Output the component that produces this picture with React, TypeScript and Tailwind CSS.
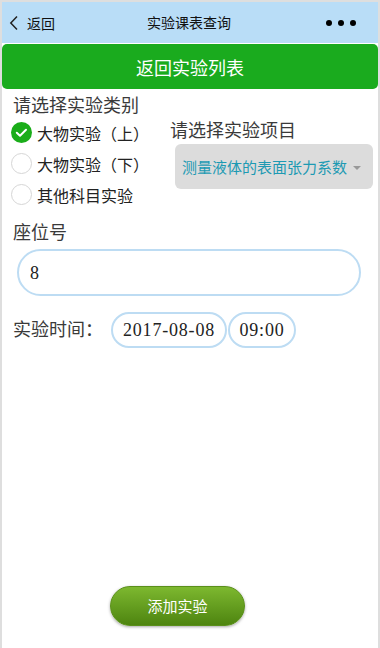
import { useState } from "react";

const sans = { fontFamily: '"Noto Sans CJK SC", "Noto Sans", sans-serif' };
const serif = { fontFamily: '"Liberation Serif", "Noto Sans CJK SC", serif' };

// label text, and an optional bracketed suffix drawn with full-width parens
const categories: [string, string?][] = [["大物实验", "上"], ["大物实验", "下"], ["其他科目实验"]];

function Radio({ checked }: { checked: boolean }) {
  if (checked) {
    return (
      <svg width="21" height="21" viewBox="0 0 21 21" className="shrink-0">
        <circle cx="10.5" cy="10.5" r="10.5" fill="#1aad19" />
        <path d="M5.8 10.8 L9 13.8 L15 7.8" fill="none" stroke="#fff" strokeWidth="2" strokeLinecap="round" strokeLinejoin="round" />
      </svg>
    );
  }
  return <span className="w-[21px] h-[21px] shrink-0 rounded-full border border-[#d6d6d6] bg-white" />;
}

export default function App() {
  const [category, setCategory] = useState(0);

  return (
    <div className="h-[648px] w-full flex flex-col border-2 border-b-0 border-[#dedede] bg-white" style={sans}>
      {/* nav bar */}
      <div className="h-[41px] shrink-0 bg-[#b9ddf7] flex items-center relative">
        <div className="flex items-center ml-[7px] gap-[8px]">
          <svg width="10" height="16" viewBox="0 0 10 16">
            <path d="M8 1.5 L1.8 8 L8 14.5" fill="none" stroke="#222" strokeWidth="1.5" />
          </svg>
          <span className="text-[14px] leading-[20px] text-[#111]">返回</span>
        </div>
        <span className="absolute left-[145px] top-[10px] text-[14px] leading-[20px] text-[#111]">实验课表查询</span>
        <div className="ml-auto mr-[22px] flex items-center gap-[6px]">
          <span className="w-[6px] h-[6px] rounded-full bg-black" />
          <span className="w-[6px] h-[6px] rounded-full bg-black" />
          <span className="w-[6px] h-[6px] rounded-full bg-black" />
        </div>
      </div>

      {/* back to list */}
      <button className="mt-[1px] h-[45px] shrink-0 w-full rounded-[5px] bg-[#1aab1e] text-white text-[18px] leading-[24px]">
        返回实验列表
      </button>

      <div className="pl-[11px] pr-[2px] flex flex-col">
        <div className="mt-[7px] text-[18px] leading-[21px] text-[#3a3a3a]" style={serif}>请选择实验类别</div>

        <div className="flex">
          <div className="flex flex-col w-[159px] -ml-[2px]">
            {categories.map(([name, part], i) => (
              <div key={name + (part ?? "")} className="h-[31px] flex items-center gap-[5px] cursor-pointer" onClick={() => setCategory(i)}>
                <Radio checked={category === i} />
                <span className="flex text-[16px] leading-[20px] text-[#222]">
                  {name}
                  {part && (
                    <>
                      <span className="w-[16px] text-right">（</span>
                      {part}
                      <span className="w-[16px] text-left">）</span>
                    </>
                  )}
                </span>
              </div>
            ))}
          </div>
          <div className="flex flex-col pt-[4px]">
            <div className="text-[18px] leading-[21px] text-[#3a3a3a]" style={serif}>请选择实验项目</div>
            <div className="mt-[2px] ml-[5px] w-[198px] h-[45px] rounded-[6px] bg-[#dcdcdc] flex items-center pl-[7px] pr-[12px]">
              <span className="text-[15px] leading-[20px] text-[#1d9ab3]">测量液体的表面张力系数</span>
              <span className="ml-auto mt-[2px] w-0 h-0 border-x-[4px] border-x-transparent border-t-[4px] border-t-[#999]" />
            </div>
          </div>
        </div>

        <div className="mt-[13px] text-[18px] leading-[21px] text-[#3a3a3a]" style={serif}>座位号</div>
        <div className="mt-[5px] ml-[4px] w-[344px] h-[47px] rounded-full border-2 border-[#bddcf3] flex items-center pl-[11px]">
          <span className="text-[18px] leading-[20px] text-[#222]" style={serif}>8</span>
        </div>

        <div className="mt-[16px] flex items-center">
          <span className="w-[98px] text-[18px] leading-[21px] text-[#3a3a3a]" style={serif}>实验时间：</span>
          <div className="w-[116px] h-[36px] rounded-full border-2 border-[#bddcf3] flex items-center justify-center">
            <span className="text-[18px] leading-[20px] tracking-[0.8px] text-[#222]" style={serif}>2017-08-08</span>
          </div>
          <div className="ml-[1px] w-[68px] h-[36px] rounded-full border-2 border-[#bddcf3] flex items-center justify-center">
            <span className="text-[18px] leading-[20px] tracking-[0.8px] text-[#222]" style={serif}>09:00</span>
          </div>
        </div>
      </div>

      <button className="mt-auto mb-[22px] ml-[108px] w-[135px] h-[40px] rounded-full bg-gradient-to-b from-[#7db82f] to-[#4e850f] border border-[#5a8f1a] shadow-[0_1px_3px_rgba(0,0,0,0.35)] text-white text-[15px] leading-[20px]">
        添加实验
      </button>
    </div>
  );
}
